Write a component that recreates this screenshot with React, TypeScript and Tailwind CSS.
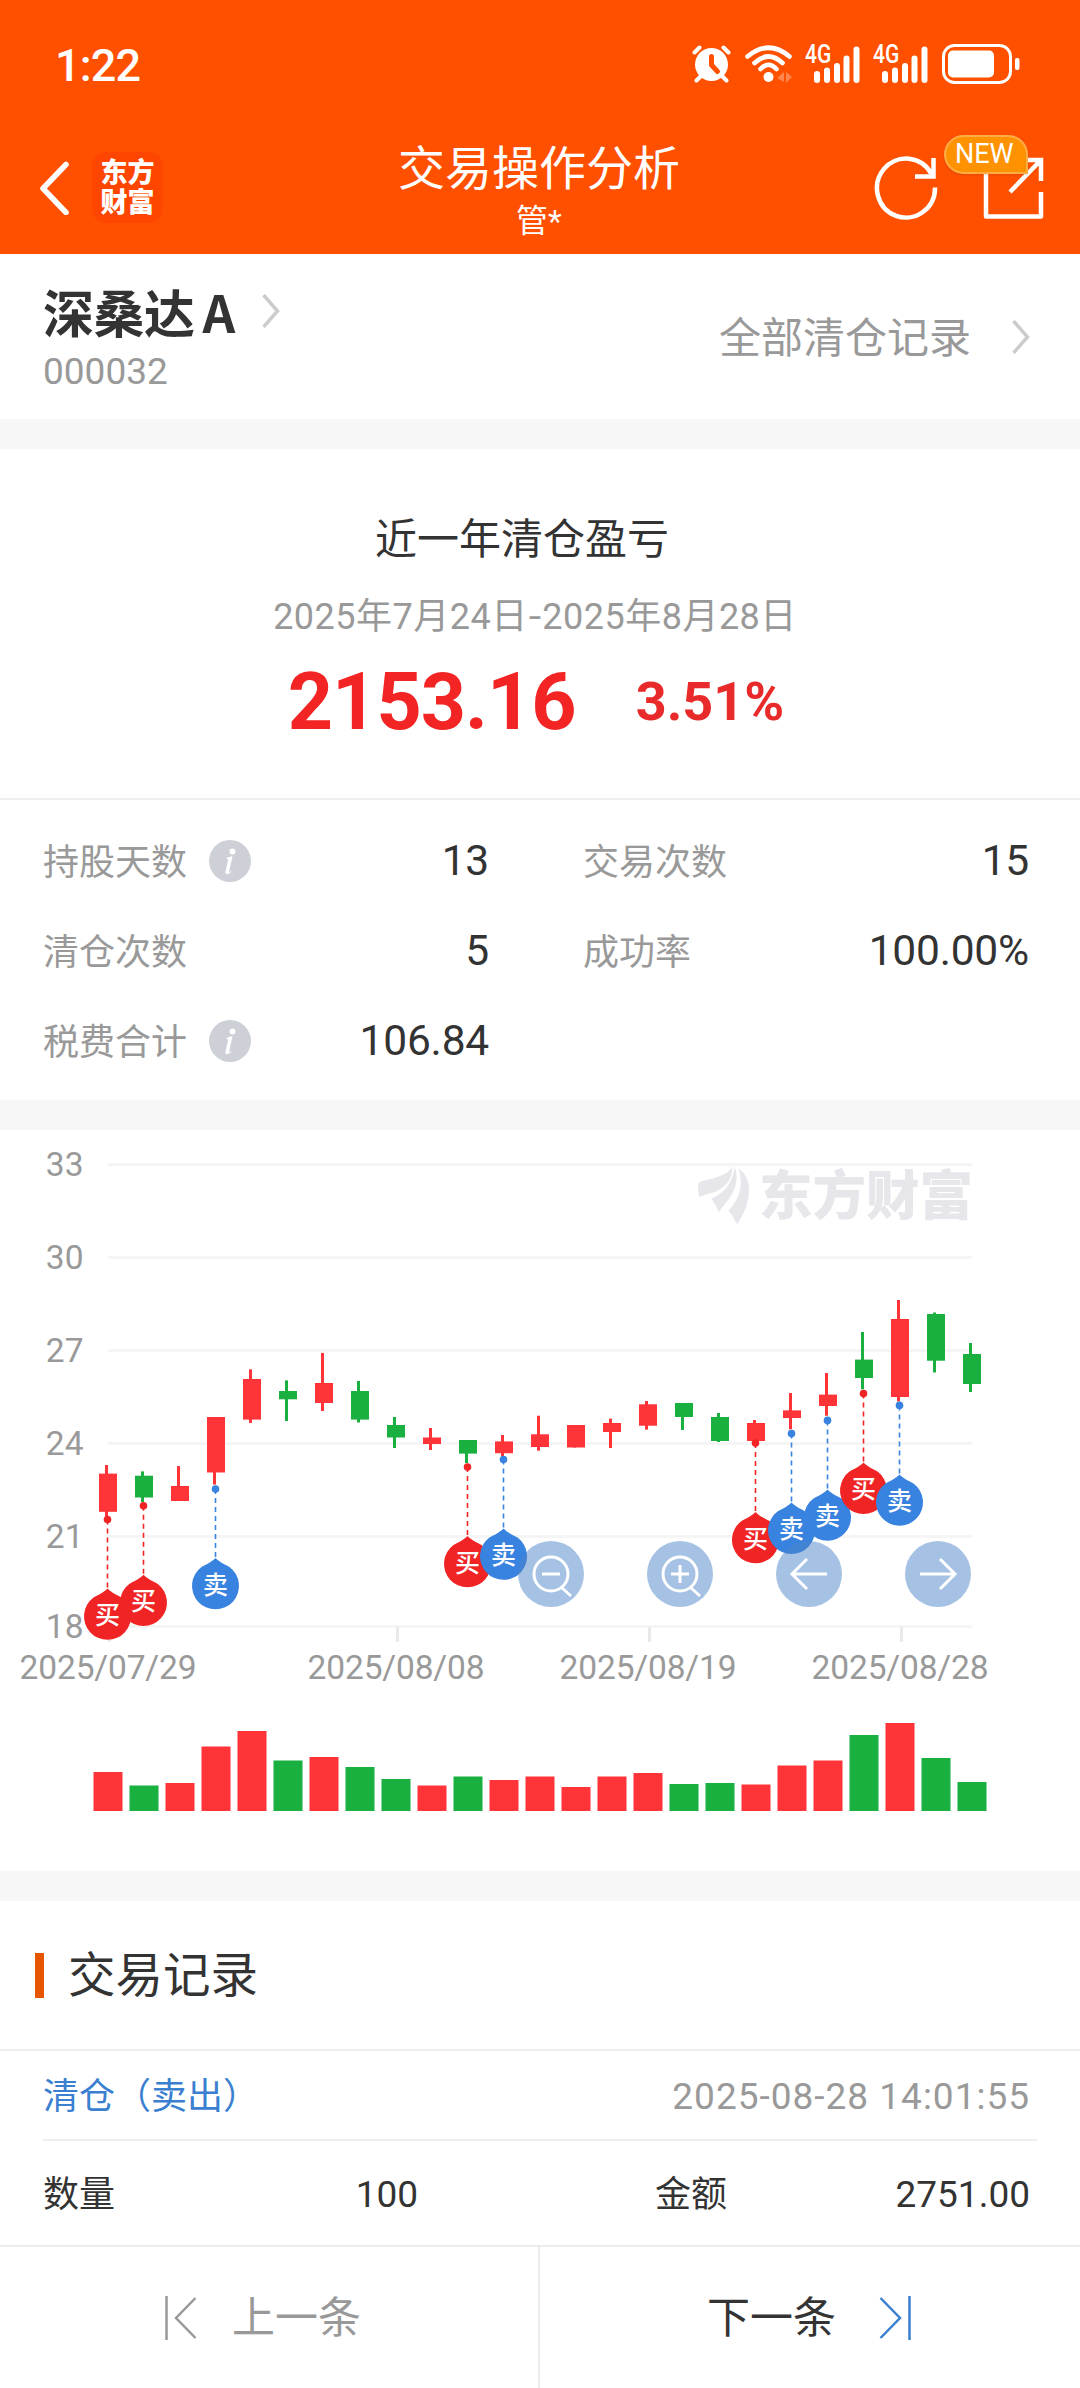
import React from 'react';
import { clsx } from 'clsx';

type Candle = {
  up: boolean;
  high: number;
  low: number;
  top: number;
  bottom: number;
  volume: number;
};

type Trade = { index: number; y: number; side: 'buy' | 'sell' };

const RED = '#ff3438';
const GREEN = '#19b040';

// all values are in chart pixels, measured from the top of the chart panel
const c = (up: boolean, high: number, low: number, top: number, bottom: number, volume: number): Candle => ({
  up, high, low, top, bottom, volume,
});

const CANDLES: Candle[] = [
  c(true, 335, 386.4, 343.6, 381.8, 39),
  c(false, 341.4, 372, 345.7, 367.5, 25.5),
  c(true, 336, 371, 356, 371, 28),
  c(true, 287, 354.6, 287, 342.5, 64.5),
  c(true, 239.3, 292.9, 249, 289.6, 80),
  c(false, 250.4, 291, 261, 269.3, 50.5),
  c(true, 222.9, 281, 253, 273, 54),
  c(false, 251, 292.5, 261, 289.6, 44),
  c(false, 287, 318, 295, 307.5, 32),
  c(true, 298, 320, 307.5, 314, 25.5),
  c(false, 310, 333, 310, 323.6, 34.5),
  c(true, 305, 326.4, 311.4, 323.2, 31),
  c(true, 285.7, 320.7, 304.3, 317, 34.5),
  c(true, 295, 317.5, 295, 317.5, 24),
  c(true, 288.6, 318, 293, 302, 34.5),
  c(true, 271, 299.6, 274.3, 295.7, 38),
  c(false, 273, 300, 273, 287, 27),
  c(false, 283, 312, 287, 311, 28),
  c(true, 290, 311, 293, 311, 26.5),
  c(true, 263, 299.3, 280.4, 288, 45.5),
  c(true, 243, 285.7, 264.6, 276, 50.5),
  c(false, 202, 259.3, 229.6, 248, 76),
  c(true, 170, 271.4, 189, 267, 88),
  c(false, 182.5, 242.5, 184, 230.7, 53),
  c(false, 213, 262, 224, 254, 29),
];

const TRADES: Trade[] = [
  { index: 0, y: 389.5, side: 'buy' },
  { index: 1, y: 375.7, side: 'buy' },
  { index: 3, y: 359, side: 'sell' },
  { index: 10, y: 337, side: 'buy' },
  { index: 11, y: 329.5, side: 'sell' },
  { index: 18, y: 313, side: 'buy' },
  { index: 20, y: 290.4, side: 'sell' },
  { index: 19, y: 303.6, side: 'sell' },
  { index: 21, y: 263.6, side: 'buy' },
  { index: 22, y: 275.4, side: 'sell' },
];

const PRICE_LINES = [
  { label: '33', y: 34.5 },
  { label: '30', y: 127.5 },
  { label: '27', y: 220.5 },
  { label: '24', y: 313.5 },
  { label: '21', y: 406.5 },
  { label: '18', y: 496.5 },
];

const DATES = [
  { label: '2025/07/29', x: 108 },
  { label: '2025/08/08', x: 396 },
  { label: '2025/08/19', x: 648 },
  { label: '2025/08/28', x: 900 },
];

const candleX = (i: number) => 107.5 + i * 36;

function AlarmIcon() {
  return (
    <svg width="40" height="38" viewBox="0 0 40 38" fill="none" strokeLinecap="round">
      <circle cx="20.500" cy="19.500" r="16.500" fill="#fff" />
      <path d="M3.500 7.500l5-5M37.500 7.500l-5-5M10 31l-4.500 4.500M31 31l4.500 4.500" stroke="#fff" strokeWidth="4" />
      <path d="M20.500 11.500v8.500l6 6.500" stroke="#ff5000" strokeWidth="5" strokeLinejoin="round" />
    </svg>
  );
}

function WifiIcon() {
  return (
    <svg width="48" height="38" viewBox="0 0 48 38" fill="none" strokeLinecap="round">
      <g stroke="#fff" strokeWidth="4.600">
        <path d="M2.500 11.500Q23.500 -6 44.500 11.500" />
        <path d="M9.500 18Q23.500 5 37.500 18" />
        <path d="M15.500 24Q23.500 15.500 31.500 24" />
      </g>
      <circle cx="23.500" cy="32" r="5" fill="#fff" />
      <path d="M32 33l7-6v10zM47 32l-6-5v11z" fill="#fff" fillOpacity="0.3" />
    </svg>
  );
}

function SignalIcon() {
  return (
    <div className="relative h-[38px] w-[56px]">
      <span className="absolute left-[-1px] top-0 origin-left scale-x-[0.84] font-medium text-[25px] leading-[20px]">4G</span>
      <svg width="56" height="38" viewBox="0 0 56 38" fill="#fff">
        <rect x="8" y="26" width="6" height="12" rx="3" />
        <rect x="18" y="22.500" width="6" height="15.500" rx="3" />
        <rect x="28" y="18" width="6" height="20" rx="3" />
        <rect x="37.500" y="10.500" width="6" height="27.500" rx="3" />
        <rect x="47.500" y="1.500" width="6" height="36.500" rx="3" />
      </svg>
    </div>
  );
}

function BatteryIcon() {
  return (
    <svg width="78" height="40" viewBox="0 0 78 40" fill="none">
      <rect x="1.500" y="1.500" width="67" height="37" rx="11" stroke="#fff" strokeWidth="3" />
      <rect x="6" y="6.500" width="46" height="27" rx="5" fill="#fff" />
      <rect x="73" y="14" width="4.500" height="12" rx="2" fill="#fff" />
    </svg>
  );
}

function Chevron({ className }: { className?: string }) {
  return (
    <svg className={className} width="18" height="34" viewBox="0 0 18 34" fill="none" stroke="#ccc" strokeWidth="3.500">
      <path d="M1.500 1l14 16-14 16" />
    </svg>
  );
}

function InfoIcon() {
  return (
    <svg width="42" height="42" viewBox="0 0 42 42">
      <circle cx="21" cy="21" r="21" fill="#cdd0d6" />
      <circle cx="23.500" cy="11.500" r="2.900" fill="#fff" />
      <path d="M17 18.500c2-1.500 4-2 6.500-2l-3.300 14.500c-.3 1.500.8 1.200 3-.8-1.500 3.500-7.500 6-6.700 1.500l2.500-11.500c.2-1.200-.8-1.200-2-1.700z" fill="#fff" />
    </svg>
  );
}

function Header() {
  return (
    <header className="h-[254px] bg-[#ff5000] text-white">
      <div className="flex h-[128px] items-center justify-between pl-[55px] pr-[60px]">
        <span className="mt-[3px] text-[45px] font-medium leading-none tracking-[-0.8px]">1:22</span>
        <div className="flex items-center">
          <AlarmIcon />
          <div className="ml-[14px]"><WifiIcon /></div>
          <div className="ml-[13px]"><SignalIcon /></div>
          <div className="ml-[12px]"><SignalIcon /></div>
          <div className="ml-[12px]"><BatteryIcon /></div>
        </div>
      </div>
      <div className="flex h-[126px] items-start justify-between pl-[38px] pr-[36px]">
        <div className="mt-[24px] flex w-[236px] items-center gap-[22px]">
          <svg width="32" height="54" viewBox="0 0 32 54" fill="none" stroke="#fff" strokeWidth="5.500" strokeLinecap="round" strokeLinejoin="round">
            <path d="M28 3.500L5 27.500l23 24" />
          </svg>
          <div className="flex h-[71px] w-[71px] flex-col items-center justify-center rounded-[14px] bg-[#ff4600] text-[27px] font-black leading-[30px]">
            <span>东方</span>
            <span>财富</span>
          </div>
        </div>
        <div className="flex flex-col items-center">
          <h1 className="mt-[15px] text-[47px] leading-[52px]">交易操作分析</h1>
          <span className="mt-[6px] text-[32px] leading-[40px]">管*</span>
        </div>
        <div className="relative flex w-[240px] justify-end gap-[42px]">
          <svg className="mt-[26px]" width="66" height="68" viewBox="0 0 66 68" fill="none" stroke="#fff" strokeWidth="4.500">
            <path d="M61 33.500A29 29.500 0 1 1 57.500 20" />
            <path d="M59.500 4v18.500H41" />
          </svg>
          <svg className="mt-[26px]" width="62" height="68" viewBox="0 0 62 68" fill="none" stroke="#fff" strokeWidth="4.500">
            <path d="M30 6H4v56.500h55V38" strokeLinejoin="round" />
            <path d="M39 6h20v21M58 7L28 38" />
          </svg>
          <span className="absolute right-[16px] top-[7px] flex h-[39px] w-[84px] items-center rounded-full rounded-br-none border-2 border-[#ffac45] bg-[#ff9200] pl-[9px] text-[27px] leading-none shadow-sm">
            NEW
          </span>
        </div>
      </div>
    </header>
  );
}

function Stat({ label, value, info }: { label: string; value: string; info?: boolean }) {
  return (
    <div className="flex h-[90px] items-center">
      <span className="pt-[3px] text-[36px] text-[#999]">{label}</span>
      {info && <span className="ml-[22px]"><InfoIcon /></span>}
      <span className="ml-auto text-[42.500px] text-[#333] tracking-[-0.2px]">{value}</span>
    </div>
  );
}

function Marker({ index, y, side }: Trade) {
  const x = candleX(index);
  const color = side === 'buy' ? '#f02424' : '#3882e0';
  return (
    <g>
      <path d={`M${x} ${y}V${y + 70}`} stroke={color} strokeWidth="1.600" strokeDasharray="5 4" />
      <circle cx={x} cy={y} r="3.800" fill={color} />
      <path
        d={`M${x} ${y + 69}c5 5 9 6 14 9A23.500 23.500 0 1 1 ${x - 14} ${y + 78}c5-3 9-4 14-9z`}
        fill={color}
      />
      <text x={x} y={y + 104.5} fontSize="25" fontWeight="500" textAnchor="middle" fill="#fff">
        {side === 'buy' ? '买' : '卖'}
      </text>
    </g>
  );
}

function Watermark() {
  return (
    <g fill="#e6e6eb">
      <path d="M732.500 37C725 47 710 49 701 51.500Q698 52.500 698 56L699 67C707 64 713 63 718 60.500C726 56 732 50 732.500 37z" />
      <path d="M734.700 36.700C738 46 737 55 732 64C728 71 723 76 718.500 82.500C717 76 714 73 711.500 68.500C722 64 732 56 734.700 36.700z" />
      <path d="M738.500 38.500C745 43 749 50 749 59C749 73 744 84 737 94C734 89 732 84 728.500 80.500C737 72 745 58 738.500 38.500z" />
      <text x="759" y="84.500" fontSize="53.500" fontWeight="900">东方财富</text>
    </g>
  );
}

const CHART_BUTTONS: { name: string; path: React.ReactNode }[] = [
  { name: 'zoom-out', path: <><circle cx="33" cy="33" r="17" /><path d="M24 33h18M43 46l10 9" /></> },
  { name: 'zoom-in', path: <><circle cx="33" cy="33" r="17" /><path d="M24 33h18M33 24v18M43 46l10 9" /></> },
  { name: 'prev', path: <path d="M51 33H17M31 18L16 33l15 15" /> },
  { name: 'next', path: <path d="M15 33h34M35 18l15 15-15 15" /> },
];

function TradeChart() {
  return (
    <section className="relative h-[741px]">
      <svg width="1080" height="741" viewBox="0 0 1080 741" className="block">
        {PRICE_LINES.map((line) => (
          <g key={line.label}>
            <path d={`M108 ${line.y}H972`} stroke="#f5f5f5" strokeWidth="3" />
            <text x="83.500" y={line.y + 11} fontSize="33.500" textAnchor="end" fill="#999">{line.label}</text>
          </g>
        ))}
        {DATES.map((date) => (
          <g key={date.label}>
            <path d={`M${date.x + 1.5} 497v15`} stroke="#e9e9e9" strokeWidth="3" />
            <text x={date.x} y="548.500" fontSize="33.500" letterSpacing="-0.15" textAnchor="middle" fill="#999">{date.label}</text>
          </g>
        ))}
        <Watermark />
        {CANDLES.map((candle, i) => {
          const x = candleX(i);
          const color = candle.up ? RED : GREEN;
          return (
            <g key={i} fill={color}>
              <rect x={x - 2.5} y={candle.high} width="3" height={candle.low - candle.high} />
              <rect x={x - 8.5} y={candle.top} width="18" height={candle.bottom - candle.top} />
              <rect x={x - 14} y={681 - candle.volume} width="29" height={candle.volume} />
            </g>
          );
        })}
        {TRADES.map((trade) => <Marker key={trade.index} {...trade} />)}
      </svg>
      <div className="absolute left-[518px] top-[411px] flex gap-[63px]">
        {CHART_BUTTONS.map(({ name, path }) => (
          <button key={name} aria-label={name} className="h-[66px] w-[66px] rounded-full bg-[#4b83c7]/50">
            <svg width="66" height="66" viewBox="0 0 66 66" fill="none" stroke="#fff" strokeWidth="3">{path}</svg>
          </button>
        ))}
      </div>
    </section>
  );
}

function PagerButton({ next }: { next?: boolean }) {
  return (
    <button className={clsx('flex w-1/2 items-center justify-center gap-[35px] text-[43px]', next ? 'pr-[2px] text-[#333]' : 'border-r-2 border-[#ececec] pr-[12px] text-[#999]')}>
      {!next && (
        <svg width="32" height="44" viewBox="0 0 32 44" fill="none" stroke="#999" strokeWidth="2.500">
          <path d="M1.500 0v44M30.500 2L11 22l19.500 20" />
        </svg>
      )}
      <span className="pt-[2px]">{next ? '下一条' : '上一条'}</span>
      {next && (
        <svg className="ml-[8px]" width="32" height="44" viewBox="0 0 32 44" fill="none" stroke="#3a7fd0" strokeWidth="2.500">
          <path d="M30.500 0v44M1.500 2L21 22 1.500 42" />
        </svg>
      )}
    </button>
  );
}

export default function App() {
  return (
    <div className="flex h-[2388px] w-[1080px] flex-col overflow-hidden bg-white font-[Roboto,'Noto_Sans_CJK_SC',sans-serif] text-[#333]" lang="zh-CN">
      <Header />

      <section className="flex h-[165px] justify-between pl-[43px] pr-[50px]">
        <div>
          <div className="mt-[30px] flex h-[54px] items-center">
            <h2 className="font-['Noto_Sans_CJK_SC',sans-serif] text-[51px] font-bold leading-[50px] tracking-[-0.5px] [word-spacing:-3px]">深桑达 A</h2>
            <Chevron className="ml-[27px]" />
          </div>
          <p className="mt-[12px] text-[37px] leading-[44px] text-[#999]">000032</p>
        </div>
        <div className="flex items-center gap-[41px] text-[42px] text-[#999]">
          <span className="pt-[3px]">全部清仓记录</span>
          <Chevron />
        </div>
      </section>

      <div className="h-[30px] bg-[#f7f7f7]" />

      <section className="flex h-[351px] flex-col items-center border-b-2 border-[#eee]">
        <h3 className="mr-[36px] mt-[63px] text-[42px] leading-[56px]">近一年清仓盈亏</h3>
        <p className="mr-[10px] mt-[24px] text-[36px] leading-[50px] tracking-[0.5px] text-[#999]">
          2025年7月24日<span className="mx-[2px] inline-block scale-x-125">-</span>2025年8月28日
        </p>
        <div className="mr-[8px] mt-[18px] flex items-center gap-[60px] font-bold">
          <span className="text-[79px] leading-[84px] tracking-[-1px] text-[#f22424]">2153.16</span>
          <span className="text-[54px] leading-[84px] text-[#e82a2a]">3.51%</span>
        </div>
      </section>

      <section className="grid h-[300px] grid-cols-[446px_446px] content-start gap-x-[94px] pl-[43px] pt-[16px]">
        <Stat label="持股天数" value="13" info />
        <Stat label="交易次数" value="15" />
        <Stat label="清仓次数" value="5" />
        <Stat label="成功率" value="100.00%" />
        <Stat label="税费合计" value="106.84" info />
      </section>

      <div className="h-[30px] bg-[#f7f7f7]" />
      <TradeChart />
      <div className="h-[30px] bg-[#f7f7f7]" />

      <section className="h-[344px]">
        <div className="flex h-[150px] items-center gap-[24px] border-b-2 border-[#eee] pl-[35px]">
          <span className="h-[45px] w-[9px] bg-[#e85500]" />
          <h3 className="pt-[3px] text-[47.500px]">交易记录</h3>
        </div>
        <div className="mx-[43px] flex h-[90px] items-center justify-between border-b-2 border-[#eee] pr-[7px] pt-[4px]">
          <span className="text-[36px] text-[#3a7fd0]">清仓（卖出）</span>
          <span className="text-[37px] tracking-[1px] text-[#999]">2025-08-28 14:01:55</span>
        </div>
        <div className="flex h-[104px] items-center pl-[43px] pr-[50px] pt-[4px] text-[36px]">
          <span>数量</span>
          <span className="w-[303px] text-right text-[37px]">100</span>
          <span className="ml-auto">金额</span>
          <span className="w-[303px] text-right text-[37px]">2751.00</span>
        </div>
      </section>

      <footer className="flex h-[143px] border-t-2 border-[#ececec]">
        <PagerButton />
        <PagerButton next />
      </footer>
    </div>
  );
}
